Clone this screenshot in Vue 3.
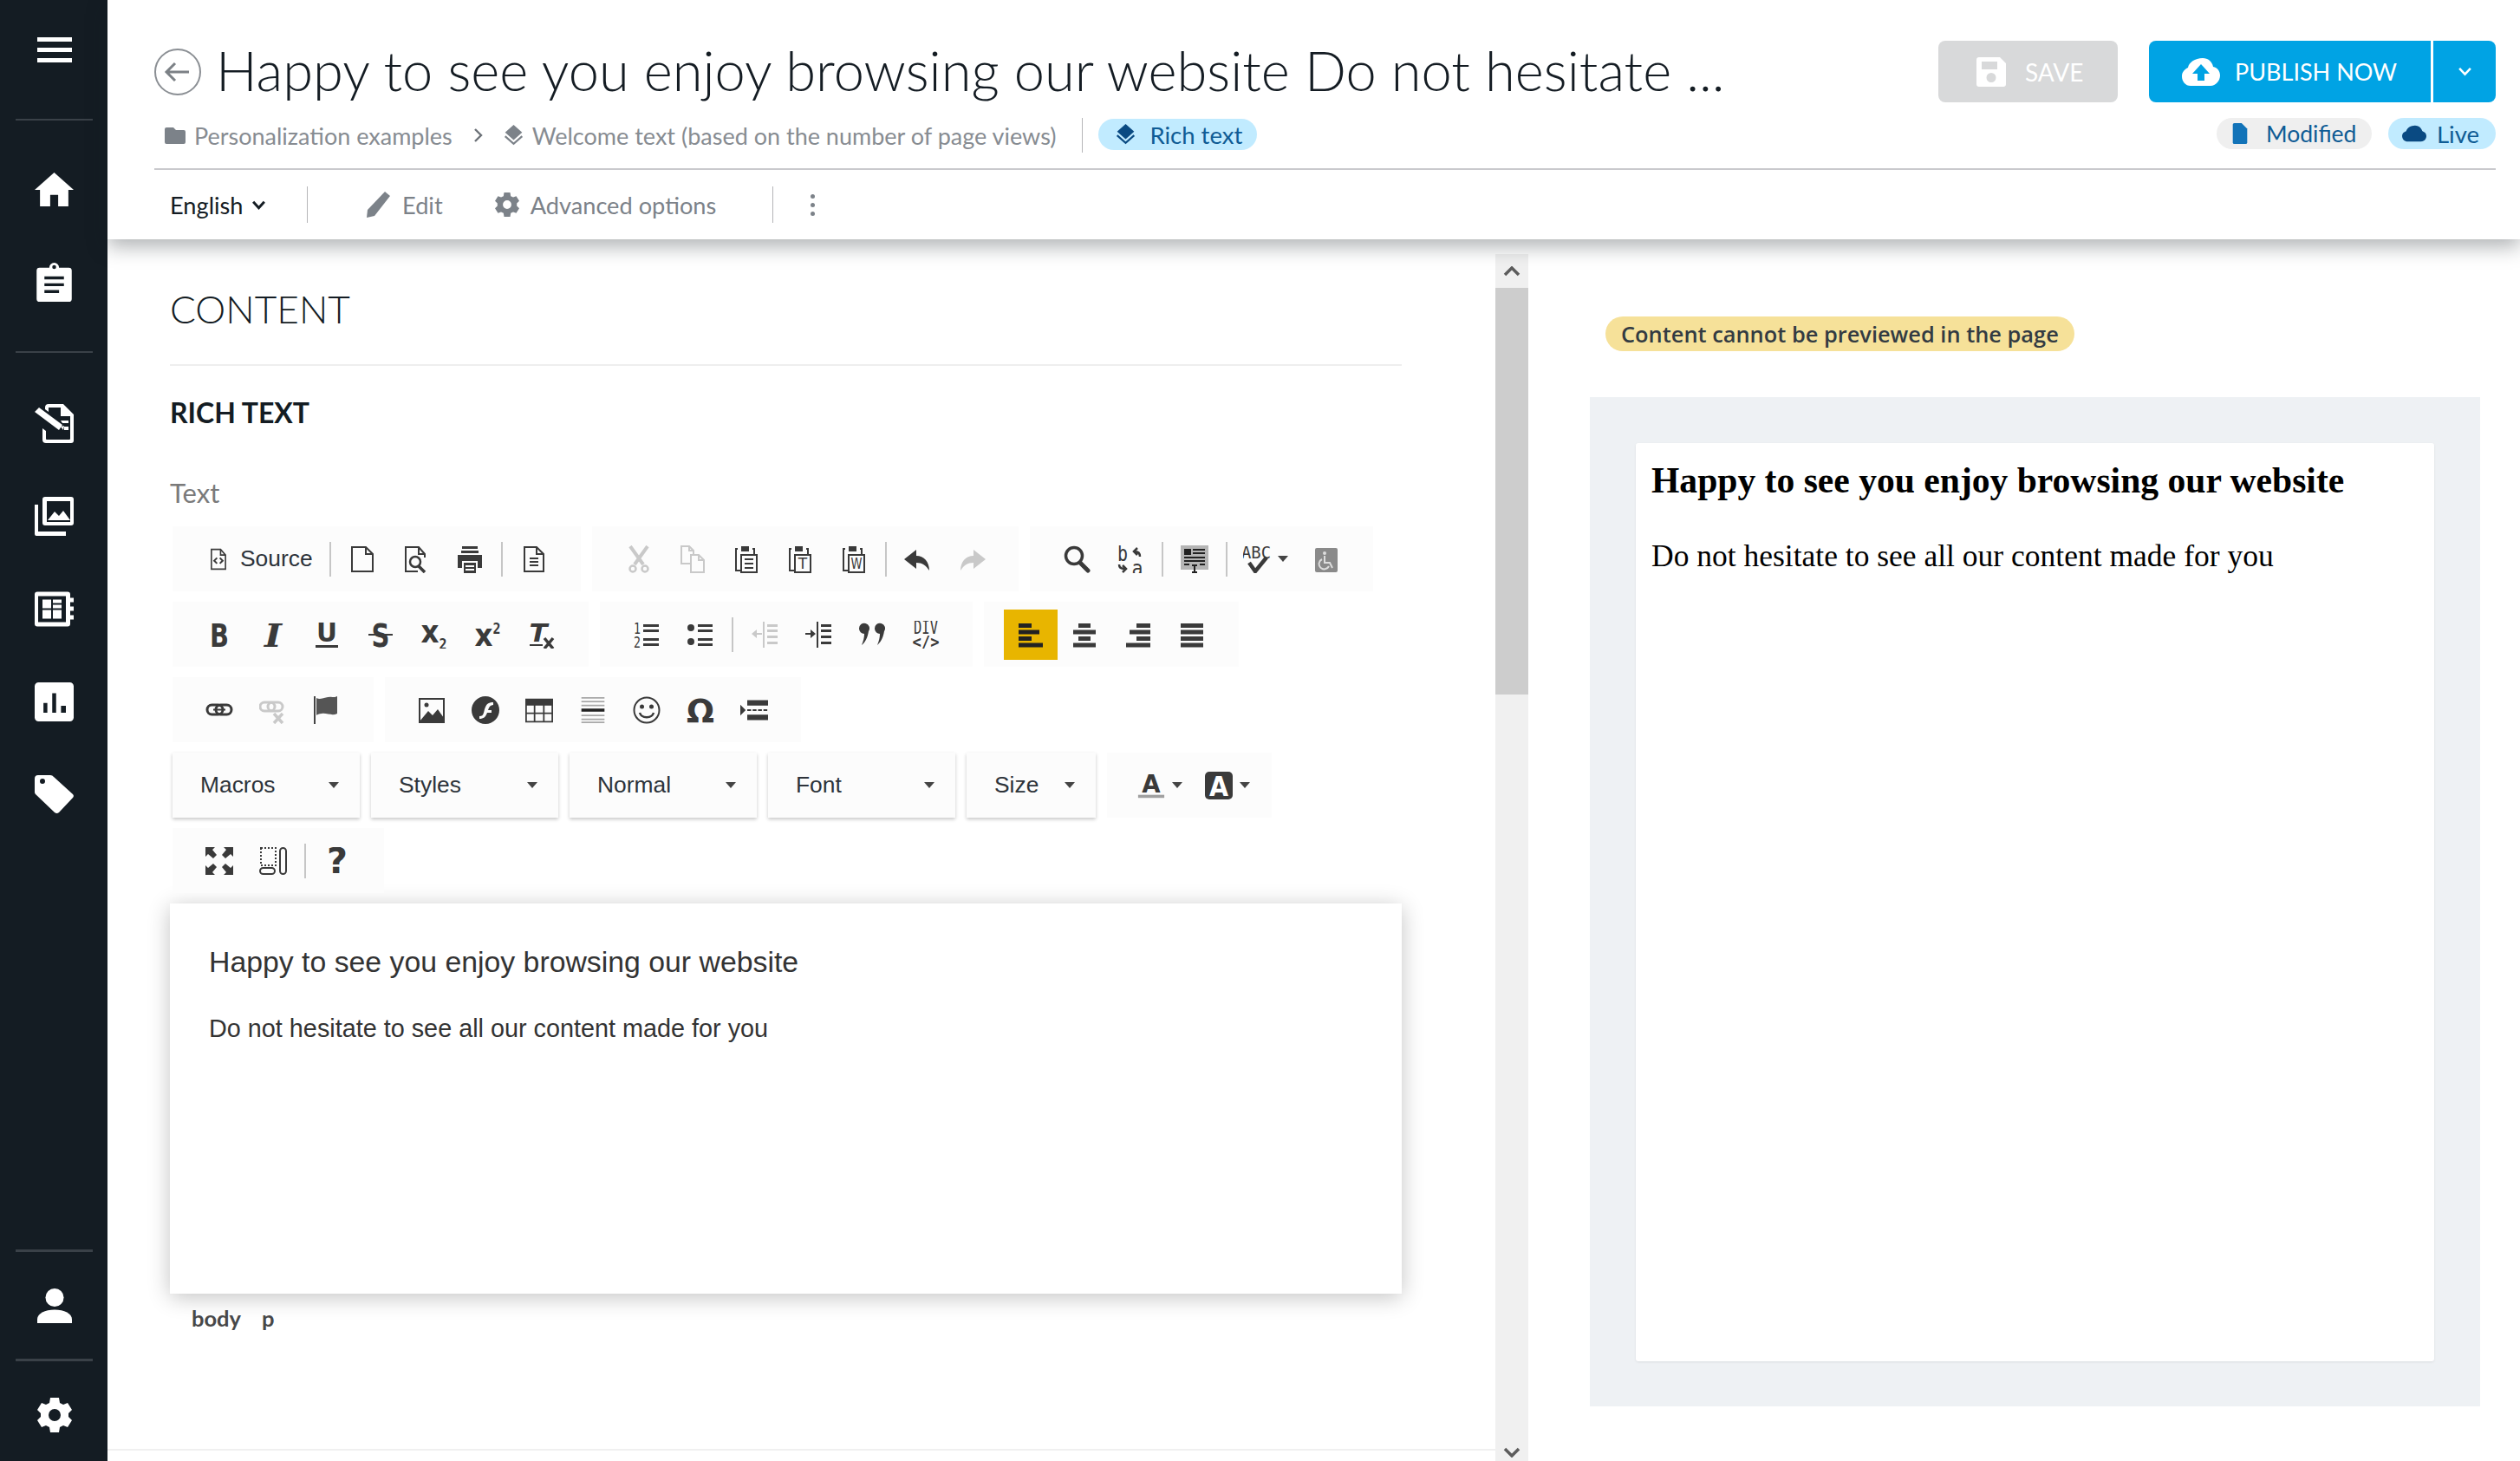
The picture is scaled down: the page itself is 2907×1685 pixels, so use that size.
<script setup>
const navTop = ['home', 'clip']
const navMid = ['content', 'gallery', 'layout', 'chart', 'tag']
const s = { sep: true }
const rows = [
  [
    [{ i: 'source', label: 'Source' }, s, { i: 'newpage' }, { i: 'preview' }, { i: 'print' }, s, { i: 'templates' }],
    [{ i: 'cut', dim: true }, { i: 'copy', dim: true }, { i: 'paste' }, { i: 'pastetext' }, { i: 'pasteword' }, s, { i: 'undo' }, { i: 'redo', dim: true }],
    [{ i: 'find' }, { i: 'replace' }, s, { i: 'selectall' }, s, { i: 'spell', arrow: true }, { i: 'a11y' }]
  ],
  [
    [{ i: 'bold' }, { i: 'italic' }, { i: 'underline' }, { i: 'strike' }, { i: 'sub' }, { i: 'sup' }, { i: 'clear' }],
    [{ i: 'ol' }, { i: 'ul' }, s, { i: 'outdent', dim: true }, { i: 'indent' }, { i: 'quote' }, { i: 'div' }],
    [{ i: 'alignl', on: true }, { i: 'alignc' }, { i: 'alignr' }, { i: 'alignj' }]
  ],
  [
    [{ i: 'link' }, { i: 'unlink', dim: true }, { i: 'flag' }],
    [{ i: 'image' }, { i: 'flash' }, { i: 'table' }, { i: 'hr' }, { i: 'smiley' }, { i: 'omega' }, { i: 'pagebreak' }]
  ]
]
const combos = [
  { t: 'Macros', c: '' }, { t: 'Styles', c: '' }, { t: 'Normal', c: '' }, { t: 'Font', c: '' }, { t: 'Size', c: 'small' }
]
const lastRow = [{ i: 'maximize' }, { i: 'blocks' }, s, { i: 'help' }]
</script>

<template>
  <div class="app">
    <svg class="defs" aria-hidden="true">
      <defs>
        <!-- navigation -->
        <symbol id="n-home" viewBox="0 0 44 38"><path fill="currentColor" d="M22 0 44 19.5H38V38H26.500V25H17.500V38H6V19.500H0Z"/></symbol>
        <symbol id="n-clip" viewBox="0 0 36 40"><path fill="currentColor" fill-rule="evenodd" d="M3 5h10a5 5 0 0 1 10 0h10a3 3 0 0 1 3 3v29a3 3 0 0 1-3 3H3a3 3 0 0 1-3-3V8a3 3 0 0 1 3-3ZM16 4.500a2 2 0 1 0 4 0 2 2 0 0 0-4 0ZM8 14v3h20v-3ZM8 21v3h20v-3ZM8 28v3h15v-3Z"/></symbol>
        <symbol id="n-content" viewBox="0 0 45 45"><path fill="currentColor" fill-rule="evenodd" d="M16 0h17l12 12v30a3 3 0 0 1-3 3H13a4 4 0 0 1-4-4V28l4 3v9a1 1 0 0 0 1 1h26a1 1 0 0 0 1-1V14H30V4H16v5l-4-3V4a4 4 0 0 1 4-4Z"/><path fill="currentColor" d="M0 9 5 4 32 24 28 30Z M30 26l4-1-1 5ZM30 19h9v3h-7ZM34 26h5v4h-5Z"/></symbol>
        <symbol id="n-gallery" viewBox="0 0 45 45"><path fill="currentColor" fill-rule="evenodd" d="M12 0h30a3 3 0 0 1 3 3v27a3 3 0 0 1-3 3H12a3 3 0 0 1-3-3V3a3 3 0 0 1 3-3ZM14 5v24h27V5Z"/><path fill="currentColor" d="M0 9h4v31h32v5H2a2 2 0 0 1-2-2Z"/><path fill="currentColor" d="M15 27 23 17 28 22 33 16 41 27Z"/></symbol>
        <symbol id="n-layout" viewBox="0 0 45 40"><path fill="currentColor" fill-rule="evenodd" d="M3 0h35a3 3 0 0 1 3 3v34a3 3 0 0 1-3 3H3a3 3 0 0 1-3-3V3a3 3 0 0 1 3-3ZM4 5v30h32V5ZM9 9h10v10H9ZM21 9h10v4H21ZM21 15h10v4H21ZM9 21h10v10H9ZM21 21h10v10H21Z"/><path fill="currentColor" d="M41 7h4v5h-4ZM41 17h4v5h-4ZM41 27h4v5h-4Z"/></symbol>
        <symbol id="n-chart" viewBox="0 0 40 40"><path fill="currentColor" fill-rule="evenodd" d="M4 0h32a4 4 0 0 1 4 4v32a4 4 0 0 1-4 4H4a4 4 0 0 1-4-4V4a4 4 0 0 1 4-4ZM9 21v10h4V21ZM18 11v20h4V11ZM27 24v7h5v-7Z"/></symbol>
        <symbol id="n-tag" viewBox="0 0 45 45"><path fill="currentColor" fill-rule="evenodd" d="M4 0h14a5 5 0 0 1 4 2l22 20a3 3 0 0 1 0 4L28 43a4 4 0 0 1-5 0L1 22a4 4 0 0 1-1-3V4a4 4 0 0 1 4-4ZM6 7a3 3 0 1 0 6 0 3 3 0 0 0-6 0Z"/></symbol>
        <symbol id="n-user" viewBox="0 0 36 36"><circle fill="currentColor" cx="18" cy="9.500" r="9.500"/><path fill="currentColor" d="M0 36v-4c0-6 8-10 18-10s18 4 18 10v4Z"/></symbol>
        <symbol id="n-gear" viewBox="0 0 40 40"><path fill="currentColor" fill-rule="evenodd" d="M15 0h10l1 6 4 2 5-2 5 8-4 4v4l4 4-5 8-5-2-4 2-1 6H15l-1-6-4-2-5 2-5-8 4-4v-4l-4-4 5-8 5 2 4-2ZM13 20a7 7 0 1 0 14 0 7 7 0 0 0-14 0Z"/></symbol>
        <!-- editor -->
        <symbol id="source" viewBox="0 0 32 32"><path fill="none" stroke="currentColor" stroke-width="2" d="M6 2h13l7 8v20H6ZM19 2v8h7"/><path fill="none" stroke="currentColor" stroke-width="2.500" d="M14 14l-4 4 4 4M18 14l4 4-4 4"/></symbol>
        <symbol id="newpage" viewBox="0 0 32 32"><path fill="none" stroke="currentColor" stroke-width="2" d="M4 2h16l8 8v20H4ZM20 2v8h8"/></symbol>
        <symbol id="preview" viewBox="0 0 32 32"><path fill="none" stroke="currentColor" stroke-width="2" d="M26 14v-4l-7-8H4v28h14M19 2v8h7"/><circle cx="15" cy="19" r="6" fill="none" stroke="currentColor" stroke-width="2.500"/><path stroke="currentColor" stroke-width="3.500" d="M19 24l7 7"/></symbol>
        <symbol id="print" viewBox="0 0 32 32"><path fill="currentColor" fill-rule="evenodd" d="M7 1h18v3H7ZM6 6h20v3H6ZM2 11h28v15h-5V18H7v8H2ZM9 20h14v12H9ZM11 23v2h10v-2ZM11 27v2h10v-2Z"/></symbol>
        <symbol id="templates" viewBox="0 0 32 32"><path fill="none" stroke="currentColor" stroke-width="2" d="M5 2h14l8 8v20H5ZM19 2v8h8"/><path stroke="currentColor" stroke-width="2" d="M11 15h10M11 19h10M11 23h10"/></symbol>
        <symbol id="cut" viewBox="0 0 32 32"><path stroke="currentColor" stroke-width="4" d="M6 1l15 21M26 1 11 22"/><circle cx="9" cy="27" r="3.500" fill="none" stroke="currentColor" stroke-width="2.500"/><circle cx="23" cy="27" r="3.500" fill="none" stroke="currentColor" stroke-width="2.500"/></symbol>
        <symbol id="copy" viewBox="0 0 32 32"><path fill="none" stroke="currentColor" stroke-width="2" d="M14 21H3V1h9l5 5v4M12 1v5h5M14 11h9l6 6v14H14ZM23 11v6h6"/></symbol>
        <symbol id="paste" viewBox="0 0 32 32"><path fill="none" stroke="currentColor" stroke-width="2" d="M6 4H4v25h5M23 4h2v6"/><path fill="currentColor" d="M10 1h9v6H10Z"/><path fill="none" stroke="currentColor" stroke-width="2" d="M10 11h18v20H10ZM14 16h10M14 21h10M14 26h10"/></symbol>
        <symbol id="pastetext" viewBox="0 0 32 32"><path fill="none" stroke="currentColor" stroke-width="2" d="M6 4H4v25h5M23 4h2v6"/><path fill="currentColor" d="M10 1h9v6H10Z"/><path fill="none" stroke="currentColor" stroke-width="2" d="M10 11h18v20H10Z"/><text x="19" y="27" font-family="DejaVu Sans" font-size="17" text-anchor="middle" fill="currentColor">T</text></symbol>
        <symbol id="pasteword" viewBox="0 0 32 32"><path fill="none" stroke="currentColor" stroke-width="2" d="M6 4H4v25h5M23 4h2v6"/><path fill="currentColor" d="M10 1h9v6H10Z"/><path fill="none" stroke="currentColor" stroke-width="2" d="M10 11h18v20H10Z"/><text x="19" y="27" font-family="DejaVu Sans" font-size="17" text-anchor="middle" textLength="13" lengthAdjust="spacingAndGlyphs" fill="currentColor">W</text></symbol>
        <symbol id="undo" viewBox="0 0 32 32"><path fill="currentColor" d="M14 5 0 16l14 11v-7c7 0 11 3 15 9 0-10-6-17-15-17Z"/></symbol>
        <symbol id="redo" viewBox="0 0 32 32"><path fill="currentColor" d="M18 5l14 11-14 11v-7c-7 0-11 3-15 9 0-10 6-17 15-17Z"/></symbol>
        <symbol id="find" viewBox="0 0 32 32"><circle cx="13" cy="12" r="9.500" fill="none" stroke="currentColor" stroke-width="3.500"/><path stroke="currentColor" stroke-width="5" stroke-linecap="round" d="M20 20l9 9"/></symbol>
        <symbol id="replace" viewBox="0 0 32 32"><text x="7" y="18" font-family="DejaVu Sans Mono" font-size="25" text-anchor="middle" textLength="12" lengthAdjust="spacingAndGlyphs" fill="currentColor">b</text><text x="24" y="35" font-family="DejaVu Sans Mono" font-size="25" text-anchor="middle" textLength="13" lengthAdjust="spacingAndGlyphs" fill="currentColor">a</text><path fill="none" stroke="currentColor" stroke-width="2.500" d="M27 13c0-4-2-6-6-6M24 3l-4 4 4 4M3 22c0 3 2 5 6 5M7 23l4 4-4 4"/></symbol>
        <symbol id="selectall" viewBox="0 0 32 32"><path fill="#b5b5b5" d="M0 0h32v28H0Z"/><path fill="#222" d="M4 4h8v7H4ZM14 4h14v2H14ZM14 8h14v2H14ZM4 13h24v2H4ZM4 17h24v2H4ZM4 21h6v2H4ZM22 21h6v2h-6Z"/><path stroke="#222" stroke-width="2" d="M13 23h6M13 31h6M16 23v8"/></symbol>
        <symbol id="spell" viewBox="0 0 32 32"><text x="15" y="15" font-family="DejaVu Sans Mono" font-size="20" text-anchor="middle" textLength="34" lengthAdjust="spacingAndGlyphs" fill="currentColor">ABC</text><path fill="none" stroke="currentColor" stroke-width="4.500" d="M7 20l7 10L27 14"/></symbol>
        <symbol id="a11y" viewBox="0 0 32 32"><path fill="#8a8a8a" d="M5 3h22a2 2 0 0 1 2 2v24a2 2 0 0 1-2 2H5a2 2 0 0 1-2-2V5a2 2 0 0 1 2-2Z"/><circle cx="14" cy="9" r="2" fill="#ddd"/><path fill="none" stroke="#ddd" stroke-width="2" d="M14 12v8h6l3 6M11 16a6 6 0 1 0 8 8"/></symbol>
        <symbol id="bold" viewBox="0 0 32 32"><text x="16" y="30" font-family="DejaVu Sans" font-weight="700" font-size="38" text-anchor="middle" textLength="22" lengthAdjust="spacingAndGlyphs" fill="currentColor">B</text></symbol>
        <symbol id="italic" viewBox="0 0 32 32"><text x="16" y="30" font-family="DejaVu Serif" font-style="italic" font-weight="700" font-size="38" text-anchor="middle" textLength="20" lengthAdjust="spacingAndGlyphs" fill="currentColor">I</text></symbol>
        <symbol id="underline" viewBox="0 0 32 32"><text x="16" y="24" font-family="DejaVu Sans" font-weight="700" font-size="31" text-anchor="middle" textLength="24" lengthAdjust="spacingAndGlyphs" fill="currentColor">U</text><path fill="currentColor" d="M3 28h26v3H3Z"/></symbol>
        <symbol id="strike" viewBox="0 0 32 32"><text x="16" y="30" font-family="DejaVu Sans" font-weight="700" font-size="38" text-anchor="middle" textLength="21" lengthAdjust="spacingAndGlyphs" fill="currentColor">S</text><path fill="currentColor" d="M2 15h28v2H2Z"/></symbol>
        <symbol id="sub" viewBox="0 0 32 32"><text x="11" y="25" font-family="DejaVu Sans" font-weight="700" font-size="35" text-anchor="middle" textLength="21" lengthAdjust="spacingAndGlyphs" fill="currentColor">x</text><text x="26" y="33" font-family="DejaVu Sans Mono" font-weight="700" font-size="18" text-anchor="middle" textLength="9" lengthAdjust="spacingAndGlyphs" fill="currentColor">2</text></symbol>
        <symbol id="sup" viewBox="0 0 32 32"><text x="11" y="29" font-family="DejaVu Sans" font-weight="700" font-size="35" text-anchor="middle" textLength="21" lengthAdjust="spacingAndGlyphs" fill="currentColor">x</text><text x="26" y="15" font-family="DejaVu Sans Mono" font-weight="700" font-size="18" text-anchor="middle" textLength="9" lengthAdjust="spacingAndGlyphs" fill="currentColor">2</text></symbol>
        <symbol id="clear" viewBox="0 0 32 32"><text x="12" y="24" font-family="DejaVu Sans" font-style="italic" font-weight="700" font-size="29" text-anchor="middle" textLength="21" lengthAdjust="spacingAndGlyphs" fill="currentColor">T</text><path fill="currentColor" d="M2 27h15v2H2Z"/><path stroke="currentColor" stroke-width="3.500" d="M19 20l10 12M29 20 19 32"/></symbol>
        <symbol id="ol" viewBox="0 0 32 32"><text x="5" y="15" font-family="DejaVu Sans Mono" font-size="17" text-anchor="middle" textLength="8" lengthAdjust="spacingAndGlyphs" fill="currentColor">1</text><text x="5" y="31" font-family="DejaVu Sans Mono" font-size="17" text-anchor="middle" textLength="8" lengthAdjust="spacingAndGlyphs" fill="currentColor">2</text><path fill="currentColor" d="M12 4h18v3H12ZM12 10h18v3H12ZM12 20h18v3H12ZM12 26h18v3H12Z"/></symbol>
        <symbol id="ul" viewBox="0 0 32 32"><circle cx="5" cy="8" r="4" fill="currentColor"/><circle cx="5" cy="24" r="4" fill="currentColor"/><path fill="currentColor" d="M13 4h17v3H13ZM13 10h17v3H13ZM13 20h17v3H13ZM13 26h17v3H13Z"/></symbol>
        <symbol id="outdent" viewBox="0 0 32 32"><path stroke="currentColor" stroke-width="2" d="M15 1v30"/><path fill="currentColor" d="M19 4h12v3H19ZM19 10h12v3H19ZM19 17h12v3H19ZM19 24h12v3H19ZM1 15l6-5v4h6v2H7v4Z"/></symbol>
        <symbol id="indent" viewBox="0 0 32 32"><path stroke="currentColor" stroke-width="2" d="M15 1v30"/><path fill="currentColor" d="M19 4h12v3H19ZM19 10h12v3H19ZM19 17h12v3H19ZM19 24h12v3H19ZM13 15l-6-5v4H1v2h6v4Z"/></symbol>
        <symbol id="quote" viewBox="0 0 32 32"><path fill="currentColor" d="M1 9a6 6 0 1 1 11 3c-1 6-3 12-8 16 2-5 3-9 3-13a6 6 0 0 1-6-6ZM19 9a6 6 0 1 1 11 3c-1 6-3 12-8 16 2-5 3-9 3-13a6 6 0 0 1-6-6Z"/></symbol>
        <symbol id="div" viewBox="0 0 32 32"><text x="16" y="15" font-family="DejaVu Sans Mono" font-size="21" text-anchor="middle" textLength="28" lengthAdjust="spacingAndGlyphs" fill="currentColor">DIV</text><text x="16" y="31" font-family="DejaVu Sans Mono" font-weight="700" font-size="20" text-anchor="middle" textLength="31" lengthAdjust="spacingAndGlyphs" fill="currentColor">&lt;/&gt;</text></symbol>
        <symbol id="alignl" viewBox="0 0 32 32"><path fill="currentColor" d="M2 3h15v5H2ZM2 10.500h24v5H2ZM2 18h15v5H2ZM2 25.500h28v5H2Z"/></symbol>
        <symbol id="alignc" viewBox="0 0 32 32"><path fill="currentColor" d="M9 3h14v5H9ZM3 10.500h26v5H3ZM9 18h14v5H9ZM3 25.500h26v5H3Z"/></symbol>
        <symbol id="alignr" viewBox="0 0 32 32"><path fill="currentColor" d="M14 3h16v5H14ZM6 10.500h24v5H6ZM14 18h16v5H14ZM2 25.500h28v5H2Z"/></symbol>
        <symbol id="alignj" viewBox="0 0 32 32"><path fill="currentColor" d="M3 3h26v5H3ZM3 10.500h26v5H3ZM3 18h26v5H3ZM3 25.500h26v5H3Z"/></symbol>
        <symbol id="link" viewBox="0 0 32 32"><rect x="2" y="10" width="18" height="11" rx="5.500" fill="none" stroke="currentColor" stroke-width="3"/><rect x="12" y="10" width="18" height="11" rx="5.500" fill="none" stroke="currentColor" stroke-width="3"/><path stroke="currentColor" stroke-width="2" d="M9 15.500h14"/></symbol>
        <symbol id="unlink" viewBox="0 0 32 32"><rect x="1" y="7" width="17" height="10" rx="5" fill="none" stroke="currentColor" stroke-width="3"/><rect x="10" y="7" width="17" height="10" rx="5" fill="none" stroke="currentColor" stroke-width="3"/><path stroke="currentColor" stroke-width="3.500" d="M17 20l10 11M27 20 17 31"/></symbol>
        <symbol id="flag" viewBox="0 0 32 32"><path stroke="#444" stroke-width="2" d="M2 0v32"/><path fill="#555" d="M4 2c5 3 12-2 18-1 3 0 4 0 6-1v20c-6 3-12-1-18 0-3 0-5 1-6 2Z"/></symbol>
        <symbol id="image" viewBox="0 0 32 32"><path fill="none" stroke="currentColor" stroke-width="2" d="M2 3h28v27H2Z"/><path fill="currentColor" d="M2 29 12 17l5 5 6-7 7 10v5H2Z"/><circle cx="10" cy="10" r="2.500" fill="currentColor"/></symbol>
        <symbol id="flash" viewBox="0 0 32 32"><path fill="currentColor" fill-rule="evenodd" d="M16 0a16 16 0 1 1 0 32 16 16 0 0 1 0-32ZM25 7c-6 0-8 2-10 8l-1 4c-1 3-2 4-5 4v3c5 0 7-2 9-7h5v-3h-4c1-4 3-6 6-6Z"/></symbol>
        <symbol id="table" viewBox="0 0 36 32"><path fill="currentColor" fill-rule="evenodd" d="M0 1h36v31H0ZM2 10v9h9v-9ZM13 10v9h10v-9ZM25 10v9h9v-9ZM2 21v9h9v-9ZM13 21v9h10v-9ZM25 21v9h9v-9Z"/></symbol>
        <symbol id="hr" viewBox="0 0 32 36"><path fill="#a8a8a8" d="M1 1h30v2H1ZM1 6h30v2H1ZM1 11h30v2H1ZM1 24h30v2H1ZM1 29h30v2H1ZM1 33h30v2H1Z"/><path fill="#222" d="M1 16h30v4H1Z"/></symbol>
        <symbol id="smiley" viewBox="0 0 32 32"><circle cx="16" cy="16" r="14.500" fill="none" stroke="currentColor" stroke-width="2"/><circle cx="10.500" cy="12" r="2.500" fill="currentColor"/><circle cx="21.500" cy="12" r="2.500" fill="currentColor"/><path fill="none" stroke="currentColor" stroke-width="2.500" d="M8 19c2 7 14 7 16 0"/></symbol>
        <symbol id="omega" viewBox="0 0 32 32"><text x="16" y="30" font-family="DejaVu Sans" font-size="38" text-anchor="middle" textLength="32" lengthAdjust="spacingAndGlyphs" font-weight="700" fill="currentColor">Ω</text></symbol>
        <symbol id="pagebreak" viewBox="0 0 36 32"><path fill="currentColor" d="M0 9l7 7-7 7ZM9 3h27v7H9ZM9 22h27v7H9Z"/><path stroke="currentColor" stroke-width="2" stroke-dasharray="5 2" d="M9 16h27"/></symbol>
        <symbol id="maximize" viewBox="0 0 32 32"><path fill="currentColor" d="M0 0h11L8 3l5 6-4 4-6-5-3 3ZM32 0v11l-3-3-6 5-4-4 5-6-3-3ZM0 32V21l3 3 6-5 4 4-5 6 3 3ZM32 32H21l3-3-5-6 4-4 6 5 3-3Z"/></symbol>
        <symbol id="blocks" viewBox="0 0 32 32"><path fill="none" stroke="currentColor" stroke-width="2" stroke-dasharray="2 2" d="M2 1h17v20H2Z"/><rect x="1" y="24" width="17" height="7" rx="3.500" fill="none" stroke="currentColor" stroke-width="2"/><rect x="24" y="1" width="7" height="30" rx="3.500" fill="none" stroke="currentColor" stroke-width="2"/></symbol>
        <symbol id="help" viewBox="0 0 32 32"><text x="16" y="30" font-family="DejaVu Sans" font-weight="700" font-size="40" text-anchor="middle" textLength="24" lengthAdjust="spacingAndGlyphs" fill="currentColor">?</text></symbol>
        <symbol id="colora" viewBox="0 0 36 32"><text x="18" y="25" font-family="DejaVu Sans" font-weight="700" font-size="32" text-anchor="middle" textLength="24" lengthAdjust="spacingAndGlyphs" fill="currentColor">A</text><path fill="#a0a0a0" d="M1 28h34v4H1Z"/></symbol>
        <symbol id="bga" viewBox="0 0 32 32"><rect width="32" height="32" rx="5" fill="currentColor"/><text x="16" y="28" font-family="DejaVu Sans" font-weight="700" font-size="32" text-anchor="middle" textLength="22" lengthAdjust="spacingAndGlyphs" fill="#fff">A</text></symbol>
      </defs>
    </svg>

    <aside class="side">
      <div class="side-head">
        <span class="burger"><i></i><i></i><i></i></span>
      </div>
      <div class="side-group">
        <div v-for="n in navTop" :key="n" class="side-item"><svg class="nav-ic"><use :href="'#n-' + n"/></svg></div>
      </div>
      <div class="side-group mid">
        <div v-for="n in navMid" :key="n" class="side-item"><svg class="nav-ic"><use :href="'#n-' + n"/></svg></div>
      </div>
      <div class="side-foot">
        <div class="side-cell user"><svg class="nav-ic small"><use href="#n-user"/></svg></div>
        <div class="side-cell gear"><svg class="nav-ic small"><use href="#n-gear"/></svg></div>
      </div>
    </aside>

    <div class="main">
      <header class="head">
        <div class="head-top">
          <svg class="back" viewBox="0 0 54 54"><circle cx="27" cy="27" r="26" fill="none" stroke="#8b8f94" stroke-width="2"/><path fill="none" stroke="#7c8186" stroke-width="3" d="M40 27H14M24 17 14 27l10 10"/></svg>
          <h1 class="title">Happy to see you enjoy browsing our website Do not hesitate ...</h1>
          <div class="actions">
            <button class="btn save">
              <svg viewBox="0 0 34 34" class="btn-ic"><path fill="#fff" fill-rule="evenodd" d="M3 0h24l7 7v24a3 3 0 0 1-3 3H3a3 3 0 0 1-3-3V3a3 3 0 0 1 3-3ZM6 5v9h18V5ZM17 18a5.500 5.500 0 1 0 0 11 5.500 5.500 0 0 0 0-11Z"/></svg>
              SAVE
            </button>
            <div class="publish">
              <button class="btn pub">
                <svg viewBox="0 0 44 32" class="btn-ic wide"><path fill="#fff" fill-rule="evenodd" d="M24 0c6 0 11 4 12 10 5 1 8 5 8 10 0 6-5 12-11 12H10C4 32 0 27 0 21c0-5 3-8 7-10 1-6 8-11 17-11ZM22 7 12 18h6v8h8v-8h6Z"/></svg>
                PUBLISH NOW
              </button>
              <button class="btn chev"><svg viewBox="0 0 16 10" class="chev-ic"><path fill="none" stroke="#fff" stroke-width="2.400" d="M2 1.500 8 8l6-6.500"/></svg></button>
            </div>
          </div>
        </div>
        <div class="crumbs">
          <svg viewBox="0 0 24 20" class="c-ic"><path fill="#7c8289" d="M2 1h8l3 3h9a2 2 0 0 1 2 2v12a2 2 0 0 1-2 2H2a2 2 0 0 1-2-2V3a2 2 0 0 1 2-2Z"/></svg>
          <span class="c-text">Personalization examples</span>
          <svg viewBox="0 0 12 18" class="c-chev"><path fill="none" stroke="#6d7278" stroke-width="2.400" d="M2 2l7 7-7 7"/></svg>
          <svg viewBox="0 0 20 22" class="c-ic layers"><path fill="#7c8289" d="M10 0l9 8-9 8-9-8Z"/><path fill="none" stroke="#7c8289" stroke-width="2" d="M1 12l9 8 9-8"/></svg>
          <span class="c-text">Welcome text (based on the number of page views)</span>
          <span class="c-sep"></span>
          <span class="pill blue rich">
            <svg viewBox="0 0 20 22" class="p-ic"><path fill="#0a4a82" d="M10 0l9 8-9 8-9-8Z"/><path fill="none" stroke="#0a4a82" stroke-width="2" d="M1 12l9 8 9-8"/></svg>
            Rich text
          </span>
          <div class="status">
            <span class="pill gray mod">
              <svg viewBox="0 0 18 26" class="p-ic file"><path fill="#1273b8" d="M2 0h9l7 7v17a2 2 0 0 1-2 2H2a2 2 0 0 1-2-2V2a2 2 0 0 1 2-2Z"/></svg>
              Modified
            </span>
            <span class="pill blue live">
              <svg viewBox="0 0 30 20" class="p-ic cloud"><path fill="#0a4a82" d="M16 0c4 0 8 3 9 7 3 1 5 3 5 6 0 4-3 7-7 7H7c-4 0-7-3-7-7 0-3 2-5 5-6 1-4 6-7 11-7Z"/></svg>
              Live
            </span>
          </div>
        </div>
        <div class="tools">
          <span class="lang">English
            <svg viewBox="0 0 16 10" class="lang-ic"><path fill="none" stroke="#141c23" stroke-width="2.800" d="M2 1.500 8 8l6-6.500"/></svg>
          </span>
          <span class="t-sep first"></span>
          <span class="tool edit">
            <svg viewBox="0 0 28 30" class="tool-ic"><path fill="#7c8289" d="M21 0l6 5L9 28l-9 2 1-9Z"/></svg>
            Edit
          </span>
          <span class="tool adv">
            <svg viewBox="0 0 40 40" class="tool-ic"><use href="#n-gear"/></svg>
            Advanced options
          </span>
          <span class="t-sep"></span>
          <span class="kebab"><i></i><i></i><i></i></span>
        </div>
      </header>

      <div class="body">
        <section class="left">
          <h2 class="section">CONTENT</h2>
          <h3 class="sub-h">RICH TEXT</h3>
          <label class="field">Text</label>

          <div class="toolbar">
            <div v-for="(row, ri) in rows" :key="ri" class="tb-row">
              <div v-for="(grp, gi) in row" :key="gi" class="group">
                <template v-for="(b, bi) in grp" :key="bi">
                  <span v-if="b.sep" class="sep"></span>
                  <span v-else class="tb" :class="{ dim: b.dim, on: b.on, lab: b.label, arr: b.arrow }">
                    <svg class="tb-ic" :class="b.i"><use :href="'#' + b.i"/></svg>
                    <span v-if="b.label" class="tb-label">{{ b.label }}</span>
                    <i v-if="b.arrow" class="caret"></i>
                  </span>
                </template>
              </div>
            </div>
            <div class="tb-row">
              <div v-for="c in combos" :key="c.t" class="combo" :class="c.c">
                <span>{{ c.t }}</span><i class="caret"></i>
              </div>
              <div class="group colors">
                <span class="tb arr"><svg class="tb-ic"><use href="#colora"/></svg><i class="caret"></i></span>
                <span class="tb arr"><svg class="tb-ic"><use href="#bga"/></svg><i class="caret"></i></span>
              </div>
            </div>
            <div class="tb-row">
              <div class="group">
                <template v-for="(b, bi) in lastRow" :key="bi">
                  <span v-if="b.sep" class="sep"></span>
                  <span v-else class="tb"><svg class="tb-ic"><use :href="'#' + b.i"/></svg></span>
                </template>
              </div>
            </div>
          </div>

          <div class="editor">
            <p class="ed-h">Happy to see you enjoy browsing our website</p>
            <p class="ed-p">Do not hesitate to see all our content made for you</p>
          </div>
          <div class="path"><span>body</span><span>p</span></div>
        </section>

        <div class="scroll">
          <span class="sc-btn"><svg viewBox="0 0 20 12" class="sc-ic"><path fill="none" stroke="#5c5c5c" stroke-width="3.500" d="M2 10l8-8 8 8"/></svg></span>
          <span class="sc-thumb"></span>
          <span class="sc-track"></span>
          <span class="sc-btn end"><svg viewBox="0 0 20 12" class="sc-ic"><path fill="none" stroke="#5c5c5c" stroke-width="3.500" d="M2 2l8 8 8-8"/></svg></span>
        </div>

        <section class="right">
          <span class="warn">Content cannot be previewed in the page</span>
          <div class="stage">
            <div class="page">
              <h2 class="pg-h">Happy to see you enjoy browsing our website</h2>
              <p class="pg-p">Do not hesitate to see all our content made for you</p>
            </div>
          </div>
        </section>
      </div>
    </div>
  </div>
</template>

<style scoped>
.app { display: flex; width: 2907px; height: 1685px; overflow: hidden; background: #fff; font-family: Lato, "Open Sans", sans-serif; color: #141c23; }
.defs { position: absolute; width: 0; height: 0; }

.side { width: 124px; flex: none; background: #141c23; display: flex; flex-direction: column; color: #fff; }
.side-head { height: 139px; padding: 43px 0 0 25px; box-sizing: border-box; flex: none; border-bottom: 2px solid #3a4148; margin: 0 17px 0 18px; }
.burger { display: flex; flex-direction: column; gap: 7px; width: 40px; }
.burger i { display: block; height: 5px; background: #fff; }
.side-group { padding: 26px 0; margin: 0 17px 0 18px; }
.side-group.mid { border-top: 2px solid #3a4148; padding-top: 28px; }
.side-item { height: 107px; display: flex; align-items: center; justify-content: center; }
.nav-ic { width: 45px; height: 45px; color: #fff; }
.nav-ic.small { width: 40px; height: 40px; }
.side-foot { margin: auto 17px 0 18px; }
.side-cell { height: 118px; display: flex; align-items: center; justify-content: center; border-top: 3px solid #3a4148; box-sizing: border-box; }
.side-cell.user { height: 126px; }
.side-cell.gear { padding-top: 8px; }

.main { width: 2783px; display: flex; flex-direction: column; }
.head { height: 276px; box-sizing: border-box; padding: 47px 28px 0 54px; background: #fff; box-shadow: 0 8px 22px rgba(20, 28, 35, .35); position: relative; z-index: 2; flex: none; }
.head-top { display: flex; align-items: center; height: 71px; }
.back { width: 54px; height: 54px; flex: none; margin-top: 1px; }
.title { margin: -5px 0 0 17px; font-size: 63.200px; font-weight: 300; line-height: 71px; white-space: nowrap; color: #141c23; }
.actions { margin-left: auto; display: flex; gap: 36px; }
.btn { border: 0; display: flex; align-items: center; font: inherit; color: #fff; height: 71px; padding: 0; font-size: 27px; }
.save { width: 207px; background: #d8d9da; border-radius: 8px; padding-left: 44px; gap: 22px; box-sizing: border-box; font-size: 28px; }
.btn-ic { width: 34px; height: 34px; flex: none; }
.btn-ic.wide { width: 44px; height: 32px; }
.publish { display: flex; gap: 3px; }
.pub { width: 325px; background: #00a3e4; border-radius: 8px 0 0 8px; padding-left: 38px; gap: 17px; box-sizing: border-box; }
.chev { width: 72px; background: #00a3e4; border-radius: 0 8px 8px 0; justify-content: center; }
.chev-ic { width: 17px; height: 11px; }

.crumbs { display: flex; align-items: center; height: 40px; margin-top: 18px; padding: 0 0 18px 12px; border-bottom: 2px solid #c9c9cd; font-size: 27px; }
.c-ic { width: 24px; height: 20px; flex: none; }
.c-ic.layers { width: 23px; height: 24px; margin-left: 23px; }
.c-text { color: #878c92; margin-left: 10px; white-space: nowrap; }
.c-chev { width: 12px; height: 18px; margin-left: 24px; }
.c-sep { width: 1px; height: 40px; background: #b5b5b8; margin: 0 18px 0 30px; }
.pill { display: inline-flex; align-items: center; border-radius: 18px; height: 36px; font-size: 27.500px; color: #0f5c95; white-space: nowrap; box-sizing: border-box; padding: 0 18px; gap: 16px; }
.pill.blue { background: #c1ebff; }
.pill.gray { background: #efefef; }
.p-ic { width: 23px; height: 24px; flex: none; }
.p-ic.file { width: 18px; height: 24px; }
.p-ic.cloud { width: 28px; height: 20px; }
.rich { width: 183px; padding-left: 20px; margin-top: -2px; }
.mod { width: 179px; gap: 21px; font-size: 26.500px; }
.live { width: 124px; padding-left: 16px; gap: 12px; }
.status { margin-left: auto; display: flex; gap: 19px; margin-top: -4px; }

.tools { display: flex; align-items: center; height: 80px; padding-left: 18px; font-size: 27.200px; }
.lang { display: flex; align-items: center; gap: 9px; width: 158px; color: #141c23; }
.lang-ic { width: 17px; height: 11px; }
.t-sep { width: 1px; height: 42px; background: #b5b5b8; margin-left: 65px; }
.t-sep.first { margin-left: 0; }
.tool { display: flex; align-items: center; gap: 13px; color: #7c8289; }
.edit { margin-left: 68px; }
.adv { margin-left: 60px; }
.tool-ic { width: 28px; height: 30px; color: #7c8289; }
.kebab { display: flex; flex-direction: column; gap: 5px; margin-left: 43px; }
.kebab i { width: 5px; height: 5px; border-radius: 50%; background: #7c8289; }

.body { flex: 1; display: flex; min-height: 0; }
.left { width: 1601px; box-sizing: border-box; padding-left: 72px; padding-right: 108px; flex: none; height: 1397px; border-bottom: 2px solid #f0f0f0; }
.section { margin: 0; height: 146px; box-sizing: border-box; padding-top: 54px; font-size: 44.200px; line-height: 52px; font-weight: 300; color: #141c23; border-bottom: 2px solid #eee; }
.sub-h { margin: 34px 0 0; font-size: 32px; line-height: 40px; font-weight: 700; color: #141c23; }
.field { display: block; margin-top: 52px; font-size: 31px; line-height: 40px; color: #7a7a7a; }

.toolbar { display: flex; flex-direction: column; gap: 12px; margin: 19px 0 0 3px; font-family: "Liberation Sans", Arial, sans-serif; color: #333; }
.tb-row { display: flex; gap: 13px; height: 75px; }
.group { display: flex; align-items: center; background: #fcfcfc; padding: 0 23px; }
.sep { width: 2px; height: 40px; background: #c6c6c6; margin: 0 5px; flex: none; }
.tb { width: 62px; height: 58px; display: flex; align-items: center; justify-content: center; color: #3a3a3a; flex: none; }
.tb.dim { color: #c9c9c9; }
.tb.on { background: #e8b500; color: #222; }
.tb.lab { width: 153px; justify-content: flex-start; padding-left: 17px; gap: 12px; box-sizing: border-box; }
.tb.arr { width: 78px; gap: 8px; }
.tb-ic { width: 32px; height: 32px; flex: none; overflow: visible; }
.tb-ic.source { width: 26px; }
.tb-label { font-size: 26.400px; color: #2d333a; }
.caret { width: 0; height: 0; border: 6px solid transparent; border-top: 7px solid #444; border-bottom: 0; flex: none; }
.combo { width: 216px; box-sizing: border-box; background: #fcfcfc; box-shadow: 0 2px 4px rgba(0, 0, 0, .22); display: flex; align-items: center; justify-content: space-between; padding: 0 24px 0 32px; font-size: 26.400px; color: #2d333a; }
.combo.small { width: 149px; }
.colors { padding: 0 12px 0 22px; }

.editor { margin: 12px 0 0; height: 450px; box-sizing: border-box; background: #fff; box-shadow: 0 4px 24px rgba(0, 0, 0, .24); padding: 44px 45px; font-family: "Liberation Sans", Arial, sans-serif; color: #333; }
.ed-h { margin: 0; font-size: 33.800px; line-height: 46px; }
.ed-p { margin: 34px 0 0; font-size: 28.800px; line-height: 40px; }
.path { display: flex; gap: 24px; padding: 12px 0 0 25px; font-size: 25.500px; line-height: 32px; font-weight: 700; color: #484848; }

.scroll { width: 38px; flex: none; margin-top: 17px; display: flex; flex-direction: column; background: #f0f0f0; height: 1392px; overflow: hidden; }
.sc-btn { height: 39px; flex: none; display: flex; align-items: center; justify-content: center; }
.sc-btn.end { margin-bottom: -9px; }
.sc-ic { width: 20px; height: 12px; }
.sc-thumb { height: 469px; background: #cdcdcd; flex: none; }
.sc-track { flex: 1; }

.right { flex: 1; padding: 89px 0 0 71px; box-sizing: border-box; }
.warn { display: inline-flex; align-items: center; height: 40px; margin-left: 18px; padding: 0 18px; border-radius: 20px; background: #f6e199; font-size: 25.400px; color: #333b42; font-family: "Open Sans", sans-serif; font-weight: 600; white-space: nowrap; }
.stage { width: 1027px; height: 1164px; margin-top: 53px; box-sizing: border-box; background: #eef1f4; padding: 53px 53px 52px 53px; }
.page { width: 921px; height: 1059px; box-sizing: border-box; background: #fff; padding: 18px; border-radius: 3px; box-shadow: 0 1px 3px rgba(0, 0, 0, .08); font-family: "Liberation Serif", "Times New Roman", serif; color: #000; }
.pg-h { margin: 0; font-size: 41.600px; line-height: 50px; font-weight: 700; }
.pg-p { margin: 40px 0 0; font-size: 35.500px; line-height: 44px; }
</style>
